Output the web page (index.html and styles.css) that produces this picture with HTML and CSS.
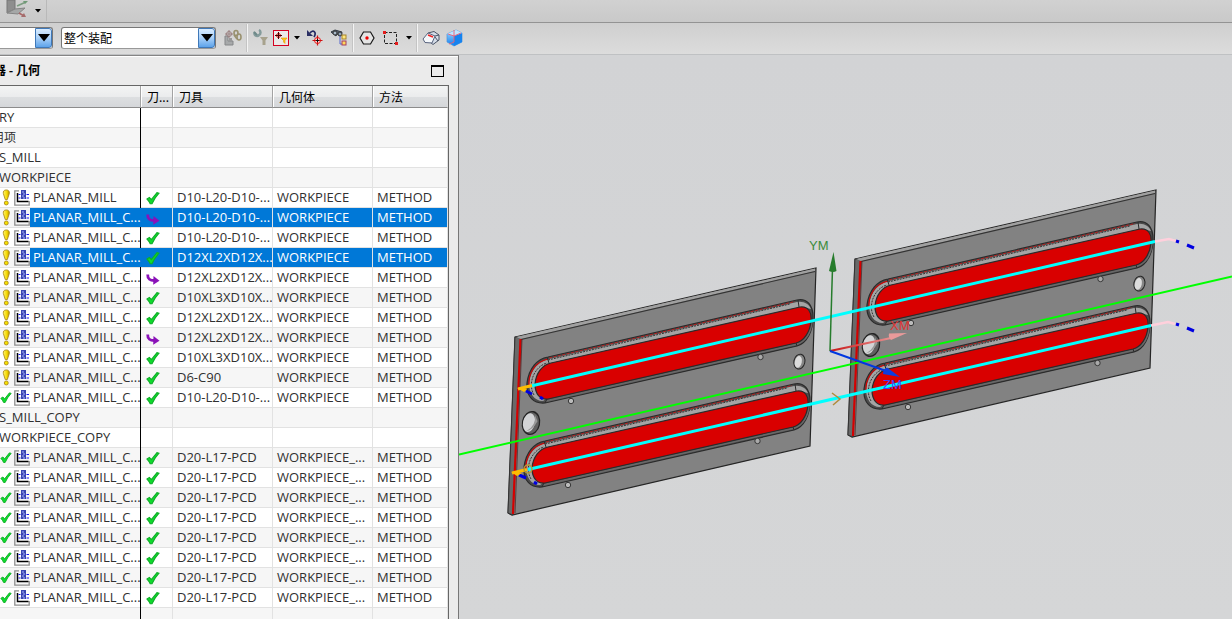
FILE: index.html
```html
<!DOCTYPE html>
<html lang="zh-CN">
<head>
<meta charset="utf-8">
<title>工序导航器 - 几何</title>
<link rel="stylesheet" href="styles.css">
</head>
<body>
<svg class="defs" aria-hidden="true">
  <defs>
    <linearGradient id="bolt" x1="0" y1="0" x2="1" y2="0"><stop offset="0" stop-color="#fff36a"/><stop offset=".6" stop-color="#f4d800"/><stop offset="1" stop-color="#b58d00"/></linearGradient>
    <linearGradient id="xaxis" gradientUnits="userSpaceOnUse" x1="830" y1="351" x2="890" y2="338"><stop offset="0" stop-color="#c81414"/><stop offset="1" stop-color="#e89090"/></linearGradient>
    <linearGradient id="cube" x1="0" y1="0" x2="0" y2="1"><stop offset="0" stop-color="#a8dcff"/><stop offset="1" stop-color="#0a7cf0"/></linearGradient>
    <symbol id="warn" viewBox="0 0 12 18">
      <path d="M6.300 1C3.700 1 2.900 2.600 3.200 4.800L5.200 11.200H7.400L9.500 4.800C9.900 2.600 8.800 1 6.300 1Z" fill="url(#bolt)" stroke="#a98716" stroke-width=".9"/>
      <circle cx="6.300" cy="14.800" r="2.100" fill="#f6e000" stroke="#a98716" stroke-width=".9"/>
    </symbol>
    <symbol id="check" viewBox="0 0 14 14">
      <path d="M1 8L3.400 6.400L5.300 8.700L11 1.600L13 2.200Q8.500 7 6 12.800H4.200Q3 10 1 8Z" fill="#0fdc2e" stroke="#0fae28" stroke-width="1.100"/>
    </symbol>
    <symbol id="turn" viewBox="0 0 14 14">
      <path d="M1.700 3.500C1.500 8 4 9.700 9 9.500" fill="none" stroke="#8a12b8" stroke-width="2.800"/>
      <path d="M7.500 5L13.500 9.700L7.200 13.800Z" fill="#8a12b8"/>
    </symbol>
    <symbol id="mill" viewBox="0 0 16 16">
      <path d="M5 .8H.8V15.200H15.200V11" fill="none" stroke="#8e8e8e" stroke-width="1.300"/>
      <path d="M3.500 3V11.500H14.500" fill="none" stroke="#000" stroke-width="1.500"/>
      <rect x="7" y="0" width="5" height="9" fill="#3a45b0"/>
      <path d="M8 2H10M9 4H11M8 6H10M9 8H11" stroke="#a9b4ff"/>
      <path d="M4.500 4.500H6.500M4.500 8H6.500M12.500 4.500H15M12.500 8H15" stroke="#1414f0" stroke-width="1.200"/>
    </symbol>
  </defs>
</svg>

<header class="topbar">
  <button class="tool orient" aria-label="定向视图">
    <svg width="24" height="20" viewBox="0 0 24 20"><path d="M2 0L10 0V9L2 13Z" fill="#8e8e8e" stroke="#777"/><path d="M10 9L20 8L13 14L2 13Z" fill="#a5a7a7" stroke="#858585"/><path d="M12 6L21 2" stroke="#7c9c80" stroke-width="1.500"/><path d="M18 1L23 1L20 4Z" fill="#6f9a76"/><path d="M14 13L19 16" stroke="#a66" stroke-width="1.500"/><path d="M19 13L21 17L16 17Z" fill="#a56c6c"/></svg>
  </button>
  <button class="drop" aria-label="更多视图"><svg width="6" height="4" viewBox="0 0 6 4"><path d="M0 0H6L3 3.500Z"/></svg></button>
</header>

<nav class="toolbar" aria-label="选择条">
  <div class="combo filter">
    <select aria-label="类型过滤器"><option></option></select>
    <span class="arrow"><svg width="12" height="8" viewBox="0 0 12 8"><path d="M0 0H12L6 7.500Z"/></svg></span>
  </div>
  <div class="combo scope">
    <select aria-label="选择范围"><option>整个装配</option></select>
    <span class="arrow"><svg width="12" height="8" viewBox="0 0 12 8"><path d="M0 0H12L6 7.500Z"/></svg></span>
  </div>
  <button class="tool" aria-label="部件间选择"><svg width="18" height="18" viewBox="0 0 18 18"><path d="M1 7H4V12H9V16H1Z" fill="#a7a9aa" stroke="#858789"/><path d="M5 9H8V12H5Z" fill="#999"/><circle cx="5" cy="5" r="2.500" fill="none" stroke="#9a8080"/><path d="M5 1V9M1 5H9" stroke="#9a8080"/><g fill="none" stroke="#99916f" stroke-width="1.600"><ellipse cx="12" cy="4" rx="2" ry="2.500"/><ellipse cx="15" cy="8" rx="2" ry="3"/><path d="M10 6L13 10"/></g></svg></button>
  <span class="sep"></span>
  <button class="tool" aria-label="重置过滤器"><svg width="18" height="18" viewBox="0 0 18 18"><path d="M3 3C1 6 5 8 7 6C9 5 9 2 7 1" fill="none" stroke="#849b9b" stroke-width="2.500"/><path d="M2 3L5 6" stroke="#6e8989" stroke-width="2"/><path d="M8 8H16L13.500 11.500V16H10.500V11.500Z" fill="#a7a28d"/></svg></button>
  <button class="tool boxed" aria-label="常规选择过滤器"><svg width="16" height="16" viewBox="0 0 16 16"><rect x=".5" y=".5" width="15" height="15" fill="#ebe8e8" stroke="#d40020"/><circle cx="5.500" cy="5.500" r="2" fill="none" stroke="#d11"/><path d="M5.500 2V9M2 5.500H9" stroke="#400"/><path d="M8 8H14L12 10.500V13.500L10.500 12V10.500Z" fill="#ffc21a" stroke="#e49a00" stroke-width=".6"/></svg></button>
  <button class="drop" aria-label="更多过滤器"><svg width="6" height="4" viewBox="0 0 6 4"><path d="M0 0H6L3 3.500Z"/></svg></button>
  <button class="tool" aria-label="撤消选择"><svg width="18" height="18" viewBox="0 0 18 18"><path d="M4 4C7 0 11 3 8 8" fill="none" stroke="#252b63" stroke-width="1.700"/><path d="M1 1V7H7Z" fill="#2b3064"/><circle cx="11.500" cy="11.500" r="3" fill="#fbeaea" stroke="#e11"/><path d="M11.500 6.500V16.500M6.500 11.500H16.500" stroke="#c11" stroke-width="1.200"/><path d="M10 11.500H13M11.500 10V13" stroke="#111"/></svg></button>
  <button class="tool" aria-label="查找组件"><svg width="18" height="18" viewBox="0 0 18 18"><path d="M1 3L5 1L12 3L11 7L7 5L6 7Z" fill="#58616c" stroke="#343c45"/><circle cx="5" cy="4" r="2" fill="#a9bac9" stroke="#333"/><circle cx="10" cy="5" r="2" fill="#8fa4b8" stroke="#333"/><path d="M10 7V15H12" fill="none" stroke="#56c"/><rect x="12" y="6" width="4" height="4" fill="#ffe77a" stroke="#a68430"/><rect x="12" y="12" width="4" height="4" fill="#ffd85a" stroke="#a33e60"/></svg></button>
  <span class="sep"></span>
  <button class="tool" aria-label="多边形选择"><svg width="18" height="18" viewBox="0 0 18 18"><path d="M5.500 3H12.500L16 9L12.500 15H5.500L2 9Z" fill="#e4e4e4" stroke="#181818" stroke-width="1.200"/><circle cx="9" cy="9" r="1.700" fill="#e00"/></svg></button>
  <button class="tool" aria-label="矩形选择"><svg width="18" height="18" viewBox="0 0 18 18"><rect x="2.500" y="3.500" width="12" height="11" fill="none" stroke="#222" stroke-dasharray="3 1.500"/><path d="M1 2H4V5H1ZM13 13H16V16H13Z" fill="#e31b1b"/></svg></button>
  <button class="drop" aria-label="更多选择方式"><svg width="6" height="4" viewBox="0 0 6 4"><path d="M0 0H6L3 3.500Z"/></svg></button>
  <span class="sep"></span>
  <button class="tool" aria-label="高亮隐藏边"><svg width="18" height="18" viewBox="0 0 18 18"><path d="M6 4L12 2.500L17 6V11L11 15.500L8 13Z" fill="#d5dde8" stroke="#4a5366"/><path d="M1 10L6 4L13 7L10 14L3 13.500Z" fill="#f5f8fb" stroke="#58637e"/><path d="M13 7L17 6M13 8L16 12" stroke="#4a5366"/><path d="M6 6L11 8" stroke="#e22" stroke-width="1.700"/></svg></button>
  <button class="tool" aria-label="着色显示"><svg width="18" height="18" viewBox="0 0 18 18"><path d="M1 5L10 1L16 4V13L8 17L1 13Z" fill="url(#cube)" stroke="#4a94dc" stroke-width=".7"/><path d="M8 7L16 4V13L8 17Z" fill="#1683ef"/><path d="M1 5L8 7L16 4L10 1Z" fill="#c0e5ff"/><path d="M2 5L8 7L15 4M8 1V13L3 15" fill="none" stroke="#ed5b74" stroke-width=".9"/></svg></button>
</nav>

<main class="work">
  <section class="panel">
    <div class="title">
      <h1>器 - 几何</h1>
      <button class="maximize" aria-label="最大化"></button>
    </div>
    <div class="list">
      <table>
        <colgroup><col class="c-name"><col class="c-path"><col class="c-tool"><col class="c-geo"><col class="c-method"></colgroup>
        <thead><tr><th aria-label="名称"></th><th>刀...</th><th>刀具</th><th>几何体</th><th>方法</th></tr></thead>
        <tbody>
          <tr><td><span class="group">RY</span></td><td></td><td></td><td></td><td></td></tr>
          <tr><td><span class="group clipped">用项</span></td><td></td><td></td><td></td><td></td></tr>
          <tr><td><span class="group">S_MILL</span></td><td></td><td></td><td></td><td></td></tr>
          <tr><td><span class="group">WORKPIECE</span></td><td></td><td></td><td></td><td></td></tr>
          <tr><td><div class="op"><svg class="state"><use href="#warn"/></svg><svg class="kind"><use href="#mill"/></svg><span>PLANAR_MILL</span></div></td><td><svg class="path"><use href="#check"/></svg></td><td>D10-L20-D10-...</td><td>WORKPIECE</td><td>METHOD</td></tr>
          <tr class="selected"><td><div class="op"><svg class="state"><use href="#warn"/></svg><svg class="kind"><use href="#mill"/></svg><span>PLANAR_MILL_C...</span></div></td><td><svg class="path"><use href="#turn"/></svg></td><td>D10-L20-D10-...</td><td>WORKPIECE</td><td>METHOD</td></tr>
          <tr><td><div class="op"><svg class="state"><use href="#warn"/></svg><svg class="kind"><use href="#mill"/></svg><span>PLANAR_MILL_C...</span></div></td><td><svg class="path"><use href="#check"/></svg></td><td>D10-L20-D10-...</td><td>WORKPIECE</td><td>METHOD</td></tr>
          <tr class="selected"><td><div class="op"><svg class="state"><use href="#warn"/></svg><svg class="kind"><use href="#mill"/></svg><span>PLANAR_MILL_C...</span></div></td><td><svg class="path"><use href="#check"/></svg></td><td>D12XL2XD12X...</td><td>WORKPIECE</td><td>METHOD</td></tr>
          <tr><td><div class="op"><svg class="state"><use href="#warn"/></svg><svg class="kind"><use href="#mill"/></svg><span>PLANAR_MILL_C...</span></div></td><td><svg class="path"><use href="#turn"/></svg></td><td>D12XL2XD12X...</td><td>WORKPIECE</td><td>METHOD</td></tr>
          <tr><td><div class="op"><svg class="state"><use href="#warn"/></svg><svg class="kind"><use href="#mill"/></svg><span>PLANAR_MILL_C...</span></div></td><td><svg class="path"><use href="#check"/></svg></td><td>D10XL3XD10X...</td><td>WORKPIECE</td><td>METHOD</td></tr>
          <tr><td><div class="op"><svg class="state"><use href="#warn"/></svg><svg class="kind"><use href="#mill"/></svg><span>PLANAR_MILL_C...</span></div></td><td><svg class="path"><use href="#check"/></svg></td><td>D12XL2XD12X...</td><td>WORKPIECE</td><td>METHOD</td></tr>
          <tr><td><div class="op"><svg class="state"><use href="#warn"/></svg><svg class="kind"><use href="#mill"/></svg><span>PLANAR_MILL_C...</span></div></td><td><svg class="path"><use href="#turn"/></svg></td><td>D12XL2XD12X...</td><td>WORKPIECE</td><td>METHOD</td></tr>
          <tr><td><div class="op"><svg class="state"><use href="#warn"/></svg><svg class="kind"><use href="#mill"/></svg><span>PLANAR_MILL_C...</span></div></td><td><svg class="path"><use href="#check"/></svg></td><td>D10XL3XD10X...</td><td>WORKPIECE</td><td>METHOD</td></tr>
          <tr><td><div class="op"><svg class="state"><use href="#warn"/></svg><svg class="kind"><use href="#mill"/></svg><span>PLANAR_MILL_C...</span></div></td><td><svg class="path"><use href="#check"/></svg></td><td>D6-C90</td><td>WORKPIECE</td><td>METHOD</td></tr>
          <tr><td><div class="op"><svg class="state"><use href="#check"/></svg><svg class="kind"><use href="#mill"/></svg><span>PLANAR_MILL_C...</span></div></td><td><svg class="path"><use href="#check"/></svg></td><td>D10-L20-D10-...</td><td>WORKPIECE</td><td>METHOD</td></tr>
          <tr><td><span class="group">S_MILL_COPY</span></td><td></td><td></td><td></td><td></td></tr>
          <tr><td><span class="group">WORKPIECE_COPY</span></td><td></td><td></td><td></td><td></td></tr>
          <tr><td><div class="op"><svg class="state"><use href="#check"/></svg><svg class="kind"><use href="#mill"/></svg><span>PLANAR_MILL_C...</span></div></td><td><svg class="path"><use href="#check"/></svg></td><td>D20-L17-PCD</td><td>WORKPIECE_...</td><td>METHOD</td></tr>
          <tr><td><div class="op"><svg class="state"><use href="#check"/></svg><svg class="kind"><use href="#mill"/></svg><span>PLANAR_MILL_C...</span></div></td><td><svg class="path"><use href="#check"/></svg></td><td>D20-L17-PCD</td><td>WORKPIECE_...</td><td>METHOD</td></tr>
          <tr><td><div class="op"><svg class="state"><use href="#check"/></svg><svg class="kind"><use href="#mill"/></svg><span>PLANAR_MILL_C...</span></div></td><td><svg class="path"><use href="#check"/></svg></td><td>D20-L17-PCD</td><td>WORKPIECE_...</td><td>METHOD</td></tr>
          <tr><td><div class="op"><svg class="state"><use href="#check"/></svg><svg class="kind"><use href="#mill"/></svg><span>PLANAR_MILL_C...</span></div></td><td><svg class="path"><use href="#check"/></svg></td><td>D20-L17-PCD</td><td>WORKPIECE_...</td><td>METHOD</td></tr>
          <tr><td><div class="op"><svg class="state"><use href="#check"/></svg><svg class="kind"><use href="#mill"/></svg><span>PLANAR_MILL_C...</span></div></td><td><svg class="path"><use href="#check"/></svg></td><td>D20-L17-PCD</td><td>WORKPIECE_...</td><td>METHOD</td></tr>
          <tr><td><div class="op"><svg class="state"><use href="#check"/></svg><svg class="kind"><use href="#mill"/></svg><span>PLANAR_MILL_C...</span></div></td><td><svg class="path"><use href="#check"/></svg></td><td>D20-L17-PCD</td><td>WORKPIECE_...</td><td>METHOD</td></tr>
          <tr><td><div class="op"><svg class="state"><use href="#check"/></svg><svg class="kind"><use href="#mill"/></svg><span>PLANAR_MILL_C...</span></div></td><td><svg class="path"><use href="#check"/></svg></td><td>D20-L17-PCD</td><td>WORKPIECE_...</td><td>METHOD</td></tr>
          <tr><td><div class="op"><svg class="state"><use href="#check"/></svg><svg class="kind"><use href="#mill"/></svg><span>PLANAR_MILL_C...</span></div></td><td><svg class="path"><use href="#check"/></svg></td><td>D20-L17-PCD</td><td>WORKPIECE_...</td><td>METHOD</td></tr>
          <tr><td></td><td></td><td></td><td></td><td></td></tr>
        </tbody>
      </table>
    </div>
  </section>

  <section class="viewport" aria-label="图形窗口">
    <svg class="scene" viewBox="459 55 773 564">
      <defs>
        <g id="pocket">
          <path d="M548 357L797 300C807 298 813 305 813 317C813 331 807 343 797 346L545 403C534 404 526 397 527 383C529 368 537 359 548 357Z" fill="#4b4b4b" stroke="#2b2b2b" stroke-width="1.200"/>
          <path d="M543 401C534 401 529 393 529 383C531 369 539 361 549 359L797 302C804 301 809 304 811 309L801 307L551 363C542 366 536 374 535 384C535 392 539 398 546 399Z" fill="#a4a4a4"/>
          <path d="M529 386C528 373 535 362 548 359" fill="none" stroke="#d80000" stroke-width="1.200"/>
          <path d="M534 395C527 383 535 366 547 363M548 360L790 304" fill="none" stroke="#343434" stroke-dasharray="2 1"/>
          <path d="M549 358L795 301.500" fill="none" stroke="#c21d1d" stroke-dasharray="3 1.500" stroke-width=".9"/>
          <path d="M546 401L797 344C806 341 811 332 812 320" fill="none" stroke="#686868" stroke-width="2"/>
          <path d="M551 363L800 307C808 306 812 312 811 321C810 332 804 341 796 343L548 399C540 400 535 394 535 384C536 373 542 365 551 363Z" fill="#d90000" stroke="#2b2b2b" stroke-width="1.200"/>
          <path d="M547 357L549 363M545 403L547 399M798 300L799 307M796 343L797 346" stroke="#2b2b2b"/>
          <circle cx="571" cy="401" r="2.700" fill="#bbb" stroke="#383838"/>
          <circle cx="760.500" cy="357" r="2.700" fill="#aaa" stroke="#383838"/>
        </g>
        <g id="plate">
          <path d="M515 337L816 268L810 446L512 515L508 513Z" fill="#828282" stroke="#252525" stroke-width="1.200"/>
          <path d="M515 337L521 338L513 515L508 513Z" fill="#696969" stroke="#303030" stroke-width=".8"/>
          <path d="M516 337L815 268.500V271L521 339Z" fill="#a0a0a0"/>
          <path d="M521 339.500L815 271.500" stroke="#333" stroke-width="1.200"/>
          <path d="M520.500 339L513 514" stroke="#d40000" stroke-width="2.200"/>
          <path d="M522 339L515 513" stroke="#422" stroke-width=".7"/>
          <use href="#pocket"/>
          <use href="#pocket" x="-3" y="84"/>
          <g transform="rotate(12 531 423)"><ellipse cx="531" cy="423" rx="8.500" ry="11.500" fill="#606060" stroke="#242424" stroke-width="1.300"/><ellipse cx="529" cy="423" rx="6" ry="9.500" fill="#d3d4d6"/><path d="M533 414Q537 425 528 432Q534 430 537 420Z" fill="#989898"/></g>
          <g transform="rotate(12 799 361)"><ellipse cx="799.500" cy="361.500" rx="5.500" ry="7.500" fill="#858585" stroke="#242424"/><ellipse cx="798.500" cy="362" rx="3.500" ry="6" fill="#dcdcdc"/></g>
        </g>
      </defs>
      <use href="#plate"/>
      <use href="#plate" x="340" y="-78"/>
      <path d="M459 454.500L1232 276.500" stroke="#00ff00" stroke-width="1.800"/>
      <g fill="none" stroke-width="3">
        <path d="M531 386L1155 241.500M528 469.500L1151 325.500" stroke="#00ffff"/>
        <path d="M1155 241.500L1169 239L1176 241M1151 325.500L1168 322L1175 324" stroke="#ffd0dc" stroke-width="2.500"/>
        <path d="M1176 241L1179 242M1187 245L1194 248M1176 324L1179 325M1187 328L1194 331M526 391L532 394M540 397L543 399M519 475L526 478M534 482L537 484" stroke="#0000e0"/>
        <path d="M518 389L532 385.500M512 473L527 469.500" stroke="#ffbd00"/>
      </g>
      <path d="M517 388L527 389L524 392ZM511 472L522 473L517 476Z" fill="#ffbd00"/>
      <circle cx="528" cy="469" r="4" fill="none" stroke="#b59b35" stroke-width="1.500"/>
      <path d="M832 393L840 399L833 405" fill="none" stroke="#b08c3c" stroke-width="1.500"/>
      <path d="M830 351L832.500 268" stroke="#267c2c" stroke-width="1.500"/>
      <path d="M833.500 252L836.500 271Q833 273 829 271Z" fill="#267c2c"/>
      <path d="M830 351L891 338" stroke="url(#xaxis)" stroke-width="2"/>
      <path d="M889 333.500L907 333L891 340Q888 337 889 333.500Z" fill="#e99a9a"/>
      <path d="M830 351L886 371" stroke="#0038e0" stroke-width="2"/>
      <path d="M887 367.500L900 377L883 374Q883 369 887 367.500Z" fill="#0b3de0"/>
      <g class="axis"><text class="y" x="809" y="250">YM</text><text class="x" x="890" y="330">XM</text><text class="z" x="883" y="389">ZM</text></g>
    </svg>
  </section>
</main>
</body>
</html>
```

FILE: styles.css
```css
* { box-sizing: border-box; }
html, body { height: 100%; }
body {
  margin: 0;
  display: flex;
  flex-direction: column;
  overflow: hidden;
  background: #d3d4d6;
  color: #303030;
  font: 13px/19px "Open Sans", "Noto Sans CJK SC", sans-serif;
}
button { padding: 0; border: 0; background: none; color: #000; }
svg { display: block; flex: none; }
.defs { position: absolute; width: 0; height: 0; }

.topbar {
  flex: none;
  display: flex;
  align-items: flex-start;
  width: 100%;
  height: 23px;
  padding-left: 5px;
  background: linear-gradient(#d1d1d1, #c9c9c9);
  border-bottom: 1px solid #939393;
}
.topbar .drop { width: 18px; height: 21px; border-right: 1px solid #b9b9b9; }
.topbar .orient { width: 24px; height: 20px; }

.toolbar {
  flex: none;
  display: flex;
  align-items: center;
  height: 32px;
  padding-bottom: 2px;
  background: linear-gradient(#cfcfcf, #dcdcdc);
  border-bottom: 1px solid #bfc1c3;
}
.tool { display: flex; align-items: center; justify-content: center; width: 24px; height: 24px; }
.tool.boxed { width: 16px; margin-right: 2px; }
.drop { display: flex; align-items: center; justify-content: center; width: 12px; height: 24px; }
.sep { width: 2px; height: 28px; margin: 0 1px; background: #f4f4f4; border-left: 1px solid #c4c4c4; }

.combo { position: relative; height: 22px; }
.combo select {
  width: 100%;
  height: 100%;
  padding: 0 20px 0 2px;
  appearance: none;
  background: #fff;
  border: 1px solid #777;
  border-bottom-color: #999;
  border-radius: 3px;
  color: #000;
  font: 12px "Noto Sans CJK SC", sans-serif;
}
.filter { width: 53px; }
.filter select { border-left: 0; border-radius: 0 3px 3px 0; }
.scope { width: 155px; margin: 0 5px 0 8px; }
.arrow {
  position: absolute;
  top: 1px;
  right: 1px;
  bottom: 1px;
  width: 17px;
  display: flex;
  align-items: center;
  justify-content: center;
  border: 1px solid #3f78b8;
  border-radius: 0 3px 3px 0;
  background: linear-gradient(#d9ecff, #a9d0f8 50%, #5da3ea);
  pointer-events: none;
}

.work { flex: 1; min-height: 0; display: flex; }
.panel {
  flex: none;
  display: flex;
  flex-direction: column;
  padding-right: 9px;
  background: #ebebeb;
  border-top: 1px solid #858585;
  border-right: 1px solid #777;
  box-shadow: inset 0 1px #fff;
}
.title { flex: none; display: flex; align-items: center; justify-content: space-between; height: 29px; padding-right: 5px; }
.title h1 { margin: 0 0 2px -6px; color: #000; font: bold 12px "Noto Sans CJK SC", sans-serif; }
.maximize { width: 13px; height: 12px; border: 1px solid #000; border-top-width: 2px; }
.list { flex: 1; min-height: 0; overflow: hidden; border: solid #666; border-width: 1px 1px 0 0; background: #fff; }

table { width: 448px; table-layout: fixed; border-collapse: separate; border-spacing: 0; }
.c-name { width: 141px; }
.c-path { width: 32px; }
.c-tool, .c-geo { width: 100px; }
.c-method { width: 75px; }
th {
  height: 22px;
  padding: 0 0 0 6px;
  border-right: 1px solid #a3a3a3;
  border-bottom: 1px solid #8c8c8c;
  background: linear-gradient(#f3f4f4, #ebeced 50%, #dddfe1 51%, #d5d7da);
  box-shadow: inset 1px 0 #fff;
  color: #000;
  font: 12px/20px "Noto Sans CJK SC", sans-serif;
  text-align: left;
  white-space: nowrap;
}
th:first-child { box-shadow: none; }
th:last-child { border-right-color: #ddd; }
td {
  height: 20px;
  padding: 0 0 0 4px;
  border-right: 1px solid #e2e2e2;
  border-bottom: 1px solid #e2e2e2;
  overflow: hidden;
  white-space: nowrap;
}
td:first-child {
  padding: 0 1px 1px 0;
  border: 0;
  box-shadow: inset -1px 0 #000, inset 0 -1px #e2e2e2;
}
tbody tr:nth-child(even) { background: #f6f6f6; }
.group { display: block; margin-left: -1px; }
.clipped { margin-left: -8px; font-size: 12px; }
.op { display: flex; align-items: center; height: 19px; }
.op span { flex: 1; padding-left: 3px; }
.state { width: 12px; height: 17px; }
.kind { width: 16px; height: 16px; margin: 0 0 0 2px; }
.path { width: 14px; height: 14px; margin-left: 1px; }
.selected td:not(:first-child), .selected .op span { background: #0078d7; color: #fff; }

.viewport { flex: 1; min-width: 0; background: linear-gradient(#d2d3d5, #d5d6d7); }
.scene { width: 100%; height: 100%; }
.axis { font: 13px "Liberation Sans", sans-serif; }
.axis .y { fill: #3c8b3c; }
.axis .x { fill: #e03434; }
.axis .z { fill: #4040ff; }
```
